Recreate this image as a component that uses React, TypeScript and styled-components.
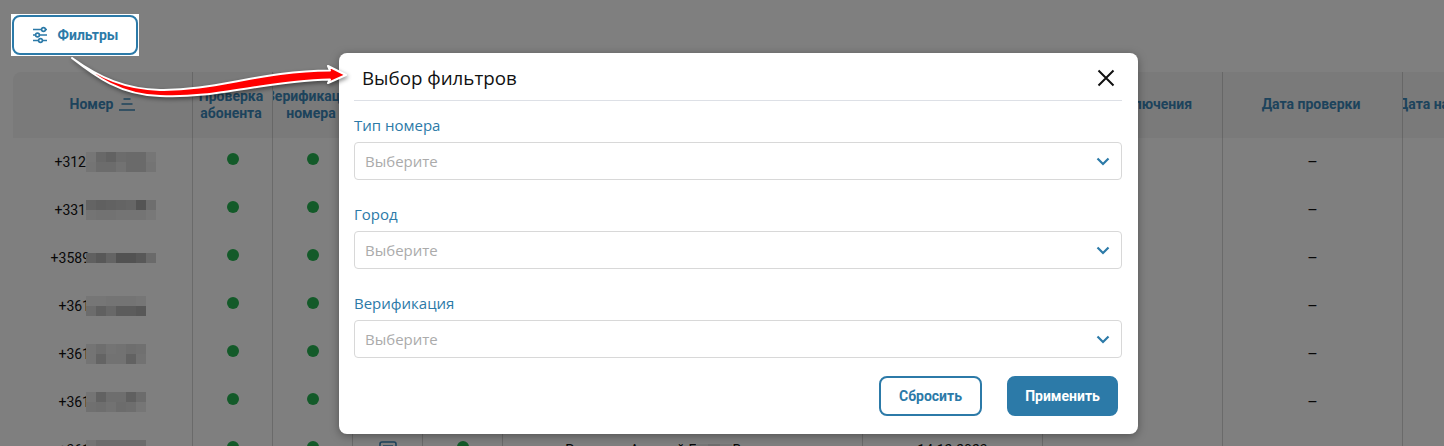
import React from 'react';
import styled, { createGlobalStyle } from 'styled-components';

const BRAND = '#2c7aa8';
const HEAD_COLOR = '#3a86b8';

const GlobalStyle = createGlobalStyle`
  html, body {
    margin: 0;
    padding: 0;
    background: #fff;
    overflow: hidden;
  }
  * {
    box-sizing: border-box;
  }
`;

const Page = styled.div`
  position: relative;
  width: 1444px;
  height: 446px;
  overflow: hidden;
  padding: 14px 0 0 13px;
  font-family: Roboto, 'Liberation Sans', sans-serif;
  font-size: 14px;
  color: #222;
`;

const Overlay = styled.div`
  position: absolute;
  inset: 0;
  z-index: 1;
  background: rgba(0, 0, 0, 0.5);
`;

const ButtonHighlight = styled.div`
  position: relative;
  z-index: 2;
  width: 128px;
  height: 42px;
  margin-left: -2px;
  padding: 1px;
  background: #fff;
`;

const FilterButton = styled.button`
  display: flex;
  align-items: center;
  justify-content: center;
  gap: 10px;
  width: 126px;
  height: 40px;
  padding: 0;
  background: #fff;
  border: 2px solid ${BRAND};
  border-radius: 8px;
  color: ${BRAND};
  font: 700 14px Roboto, sans-serif;
`;

const Table = styled.div`
  width: 1700px;
  margin-top: 16px;
`;

const columns = '180px 80px 80px 70px 80px 360px 180px 180px 180px 180px';

const HeadRow = styled.div`
  display: grid;
  grid-template-columns: ${columns};
  height: 66px;
  background: #f5f5f5;
  border-radius: 8px 0 0 0;
`;

const HeadCell = styled.div<{ $pad?: number }>`
  display: flex;
  align-items: center;
  justify-content: center;
  gap: 6px;
  overflow: hidden;
  padding: 0 ${p => p.$pad ?? 3}px 1px 0;
  border-right: 1px solid #cfcfcf;
  color: ${HEAD_COLOR};
  font-weight: 700;
  line-height: 17px;
  text-align: center;
  white-space: nowrap;
`;

const HeadText = styled.span`
  flex-shrink: 0;
`;

const Row = styled.div`
  display: grid;
  grid-template-columns: ${columns};
  height: 48px;
`;

const Cell = styled.div`
  display: flex;
  align-items: center;
  justify-content: center;
  border-right: 1px solid #d4d4d4;
  color: #111;
  white-space: nowrap;
`;

const DashCell = styled(Cell)`
  font-size: 16px;
`;

const PhoneCell = styled(Cell)`
  justify-content: flex-start;
`;

const PhoneSlot = styled.div`
  display: flex;
  justify-content: flex-end;
  width: 73px;
`;

const PhoneText = styled.span<{ $cut: number }>`
  margin-right: -${p => p.$cut}px;
`;

const MosaicImage = styled.svg`
  position: relative;
  display: block;
  flex-shrink: 0;
`;

const Dot = styled.span`
  width: 12px;
  height: 12px;
  margin-bottom: 6px;
  border-radius: 50%;
  background: #26b552;
`;

const Modal = styled.div`
  position: absolute;
  z-index: 3;
  left: 339px;
  top: 53px;
  display: flex;
  flex-direction: column;
  width: 799px;
  height: 381px;
  padding: 0 16px 0 15px;
  background: #fff;
  border-radius: 8px;
  box-shadow: 0 2px 10px rgba(0, 0, 0, 0.35);
  font-family: 'Open Sans', 'Noto Sans', sans-serif;
`;

const ModalHeader = styled.div`
  display: flex;
  align-items: center;
  justify-content: space-between;
  height: 48px;
  padding: 2px 7px 0 8px;
  border-bottom: 1px solid #dde0e6;
`;

const ModalTitle = styled.div`
  color: #111;
  font-size: 18.75px;
`;

const CloseButton = styled.button`
  display: flex;
  padding: 0;
  background: none;
  border: 0;
`;

const Fields = styled.div`
  display: flex;
  flex-direction: column;
  gap: 25px;
  padding-top: 15px;
`;

const Field = styled.div`
  display: flex;
  flex-direction: column;
  gap: 8px;
`;

const FieldLabel = styled.label`
  color: ${BRAND};
  font-size: 15px;
  line-height: 18px;
`;

const SelectBox = styled.div`
  display: flex;
  align-items: center;
  justify-content: space-between;
  height: 38px;
  padding: 0 11px 0 10px;
  border: 1px solid #d8d8d8;
  border-radius: 4px;
`;

const Placeholder = styled.span`
  color: #ababab;
  font-size: 15px;
`;

const Footer = styled.div`
  display: flex;
  justify-content: flex-end;
  gap: 25px;
  margin-top: 18px;
  padding-right: 4px;
`;

const FooterButton = styled.button<{ $primary?: boolean }>`
  width: ${p => (p.$primary ? 111 : 103)}px;
  height: 40px;
  padding: 0;
  background: ${p => (p.$primary ? BRAND : '#fff')};
  border: 2px solid ${BRAND};
  border-radius: 8px;
  color: ${p => (p.$primary ? '#fff' : BRAND)};
  font: 700 14px Roboto, sans-serif;
`;

const ArrowImage = styled.svg`
  position: absolute;
  z-index: 4;
  left: 60px;
  top: 50px;
  filter: drop-shadow(1px 2px 2px rgba(0, 0, 0, 0.45));
`;

// shades of the blurred cells, as they look on the dimmed page
const rows = [
  { phone: '+312', cut: 0, shades: [[0x76, 0x68, 0x62, 0x6c, 0x6a, 0x6a, 0x76], [0x74, 0x6c, 0x6c, 0x72, 0x6a, 0x6a, 0x74]] },
  { phone: '+331', cut: 0, shades: [[0x64, 0x60, 0x62, 0x64, 0x66, 0x54, 0x6e], [0x74, 0x72, 0x72, 0x74, 0x74, 0x74, 0x78]] },
  { phone: '+3589', cut: 4, shades: [[0x60, 0x58, 0x64, 0x52, 0x52, 0x58, 0x6a]] },
  { phone: '+361', cut: 4, shades: [[0x76, 0x76, 0x74, 0x74, 0x74, 0x76], [0x6c, 0x60, 0x68, 0x5c, 0x5c, 0x58]] },
  { phone: '+361', cut: 4, shades: [[0x74, 0x6e, 0x74, 0x72, 0x6e, 0x70], [0x74, 0x64, 0x72, 0x72, 0x62, 0x72]] },
  { phone: '+361', cut: 4, shades: [[0x74, 0x62, 0x6e, 0x6e, 0x60, 0x6c], [0x70, 0x6e, 0x72, 0x6c, 0x6e, 0x76]] },
];

const lastRowShades = [[0x74, 0x6c, 0x6c, 0x6c, 0x6c, 0x6c], [0x74, 0x6c, 0x6c, 0x6c, 0x6c, 0x6c]];
const nameShades = [[0x76, 0x6e, 0x76]];

const Mosaic = ({ shades, size = 10 }: { shades: number[][]; size?: number }) => (
  <MosaicImage width={shades[0].length * size} height={shades.length * size}>
    {shades.map((line, y) =>
      line.map((shade, x) => {
        const v = Math.min(255, shade * 2);
        return <rect key={x} x={x * size} y={y * size} width={size} height={size} fill={`rgb(${v},${v},${v})`} />;
      }),
    )}
  </MosaicImage>
);

const SlidersIcon = () => (
  <svg width="16" height="18" viewBox="0 0 16 18" fill="none" stroke={BRAND} strokeWidth="1.6">
    <path d="M1 3.5h8.6M13.4 3.5H15M1 9h2.6M7.4 9H15M1 14.5h5.6M10.4 14.5H15" />
    <circle cx="11.5" cy="3.5" r="1.9" />
    <circle cx="5.5" cy="9" r="1.9" />
    <circle cx="8.5" cy="14.5" r="1.9" />
  </svg>
);

const SortIcon = () => (
  <svg width="16" height="13" viewBox="0 0 16 13" fill="none" stroke={HEAD_COLOR} strokeWidth="1.6">
    <path d="M4.5 1h7M2.5 6h11M0 12h16" />
  </svg>
);

const DocIcon = () => (
  <svg width="18" height="18" viewBox="0 0 18 18" fill="none" stroke={HEAD_COLOR} strokeWidth="1.6">
    <rect x="1" y="1" width="16" height="16" rx="2" />
    <path d="M4 5h10M4 9h10" />
  </svg>
);

const Chevron = () => (
  <svg width="14" height="9" viewBox="0 0 14 9" fill="none" stroke={BRAND} strokeWidth="2.2">
    <path d="M1.5 1.5 7 7l5.5-5.5" />
  </svg>
);

const CloseIcon = () => (
  <svg width="18" height="18" viewBox="0 0 18 18" fill="none" stroke="#111" strokeWidth="2">
    <path d="M1.5 1.5l15 15M16.5 1.5l-15 15" />
  </svg>
);

const Arrow = () => (
  <ArrowImage width="300" height="60" viewBox="60 50 300 60">
    <path
      d="M72 58C100 78 125 89 160 90C215 91 260 71 330 70.5L328 66L346 75L328 83L330 79.5C265 81 215 99 160 96C120 95 95 76 72 58Z"
      fill="#f00"
      stroke="#fff"
      strokeWidth="2"
      strokeLinejoin="round"
    />
  </ArrowImage>
);

const filters = ['Тип номера', 'Город', 'Верификация'];

export default function App() {
  return (
    <Page>
      <GlobalStyle />
      <ButtonHighlight>
        <FilterButton>
          <SlidersIcon />
          Фильтры
        </FilterButton>
      </ButtonHighlight>

      <Table>
        <HeadRow>
          <HeadCell $pad={0}>
            <HeadText>Номер</HeadText>
            <SortIcon />
          </HeadCell>
          <HeadCell>
            <HeadText>
              Проверка
              <br />
              абонента
            </HeadText>
          </HeadCell>
          <HeadCell>
            <HeadText>
              Верификация
              <br />
              номера
            </HeadText>
          </HeadCell>
          <HeadCell />
          <HeadCell />
          <HeadCell />
          <HeadCell />
          <HeadCell $pad={7}>
            <HeadText>Дата подключения</HeadText>
          </HeadCell>
          <HeadCell>
            <HeadText>Дата проверки</HeadText>
          </HeadCell>
          <HeadCell>
            <HeadText>Дата начала использования</HeadText>
          </HeadCell>
        </HeadRow>

        {rows.map((row, i) => (
          <Row key={i}>
            <PhoneCell>
              <PhoneSlot>
                <PhoneText $cut={row.cut}>{row.phone}</PhoneText>
              </PhoneSlot>
              <Mosaic shades={row.shades} />
            </PhoneCell>
            <Cell>
              <Dot />
            </Cell>
            <Cell>
              <Dot />
            </Cell>
            <Cell />
            <Cell />
            <Cell />
            <Cell />
            <Cell />
            <DashCell>–</DashCell>
            <Cell />
          </Row>
        ))}

        <Row>
          <PhoneCell>
            <PhoneSlot>
              <PhoneText $cut={4}>+361</PhoneText>
            </PhoneSlot>
            <Mosaic shades={lastRowShades} />
          </PhoneCell>
          <Cell>
            <Dot />
          </Cell>
          <Cell>
            <Dot />
          </Cell>
          <Cell>
            <DocIcon />
          </Cell>
          <Cell>
            <Dot />
          </Cell>
          <Cell>
            Родригес Алексей Е
            <Mosaic shades={nameShades} size={12} />
            Владимир
          </Cell>
          <Cell>14.12.2023</Cell>
          <Cell />
          <Cell />
          <Cell />
        </Row>
      </Table>

      <Overlay />

      <Modal>
        <ModalHeader>
          <ModalTitle>Выбор фильтров</ModalTitle>
          <CloseButton>
            <CloseIcon />
          </CloseButton>
        </ModalHeader>
        <Fields>
          {filters.map(name => (
            <Field key={name}>
              <FieldLabel>{name}</FieldLabel>
              <SelectBox>
                <Placeholder>Выберите</Placeholder>
                <Chevron />
              </SelectBox>
            </Field>
          ))}
        </Fields>
        <Footer>
          <FooterButton>Сбросить</FooterButton>
          <FooterButton $primary>Применить</FooterButton>
        </Footer>
      </Modal>

      <Arrow />
    </Page>
  );
}
